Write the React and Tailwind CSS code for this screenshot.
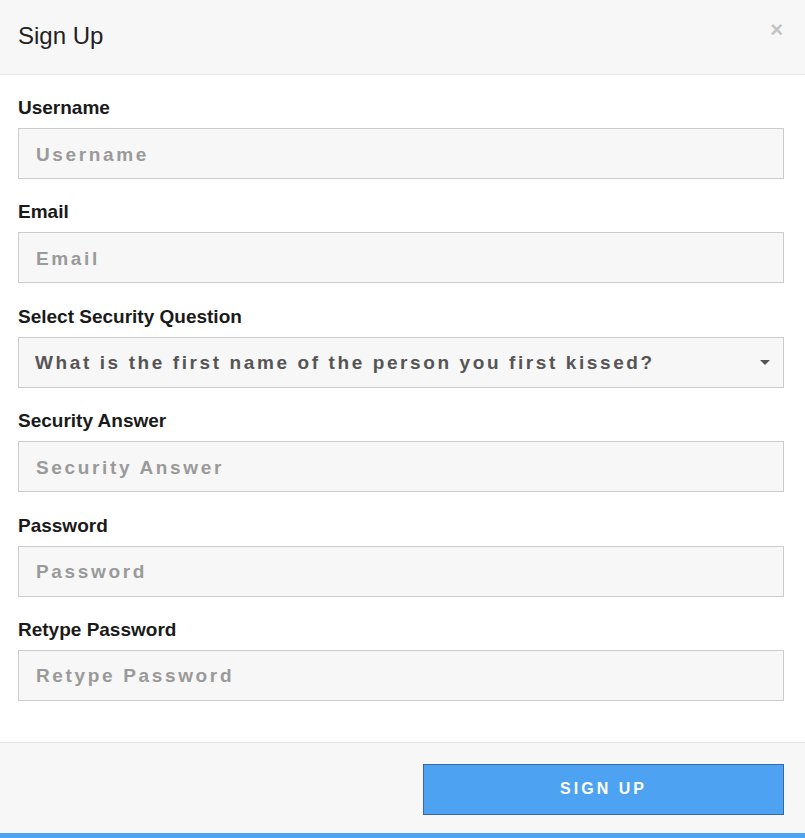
import React, { useState } from "react";

const fields = [
  { id: "username", label: "Username", type: "text" },
  { id: "email", label: "Email", type: "email" },
  { id: "question", label: "Select Security Question", select: true },
  { id: "answer", label: "Security Answer", type: "text" },
  { id: "password", label: "Password", type: "password" },
  { id: "retype", label: "Retype Password", type: "password" },
];

const questions = [
  "What is the first name of the person you first kissed?",
  "What was the name of your first pet?",
  "In what city were you born?",
];

export default function App() {
  const [question, setQuestion] = useState(questions[0]);

  return (
    <div className="w-[805px] h-[838px] bg-white font-['Liberation_Sans',Arial,sans-serif] flex flex-col">
      {/* header */}
      <div className="h-[75px] shrink-0 bg-[#f7f7f7] border-b border-[#e5e5e5] flex items-center justify-between pl-[18px] pr-[22px]">
        <h2 className="text-[24px] text-[#222] leading-none -mt-[3px]">Sign Up</h2>
        <button className="text-[22px] font-bold text-[#c4c4c4] leading-none -mt-[14px]">×</button>
      </div>

      {/* body */}
      <form className="px-[18px] pt-[22px]" onSubmit={(e) => e.preventDefault()}>
        {fields.map((f) => (
          <div key={f.id} className="mb-[22.4px] last:mb-[41px]">
            <label htmlFor={f.id} className="block text-[19px] font-bold text-[#1a1a1a] leading-[21px] mb-[10px]">
              {f.label}
            </label>
            {f.select ? (
              <div className="relative">
                <select
                  id={f.id}
                  value={question}
                  onChange={(e) => setQuestion(e.target.value)}
                  className="appearance-none w-[766px] h-[51px] bg-[#f7f7f7] border border-[#cccccc] pl-[16px] pr-[40px] pt-[2px] text-[19px] font-bold tracking-[2.6px] text-[#555] outline-none"
                >
                  {questions.map((q) => (
                    <option key={q}>{q}</option>
                  ))}
                </select>
                <span className="pointer-events-none absolute right-[17px] top-[23px] w-0 h-0 border-l-[5px] border-r-[5px] border-t-[5px] border-l-transparent border-r-transparent border-t-[#555]" />
              </div>
            ) : (
              <input
                id={f.id}
                type={f.type}
                placeholder={f.label}
                className="w-[766px] h-[51px] bg-[#f7f7f7] border border-[#cccccc] px-[17px] pt-[2px] text-[19px] font-bold tracking-[2.65px] text-[#555] placeholder:text-[#9a9a9a] outline-none"
              />
            )}
          </div>
        ))}
      </form>

      {/* footer */}
      <div className="flex-1 bg-[#f7f7f7] border-t border-[#e5e5e5] border-b-[5px] border-b-[#4da2ef] flex justify-end items-start pt-[21px] pr-[21px]">
        <button className="w-[361px] h-[51px] bg-[#4da2f1] border border-[#3868a8] text-white text-[16px] font-bold tracking-[3px]">
          SIGN UP
        </button>
      </div>
    </div>
  );
}
